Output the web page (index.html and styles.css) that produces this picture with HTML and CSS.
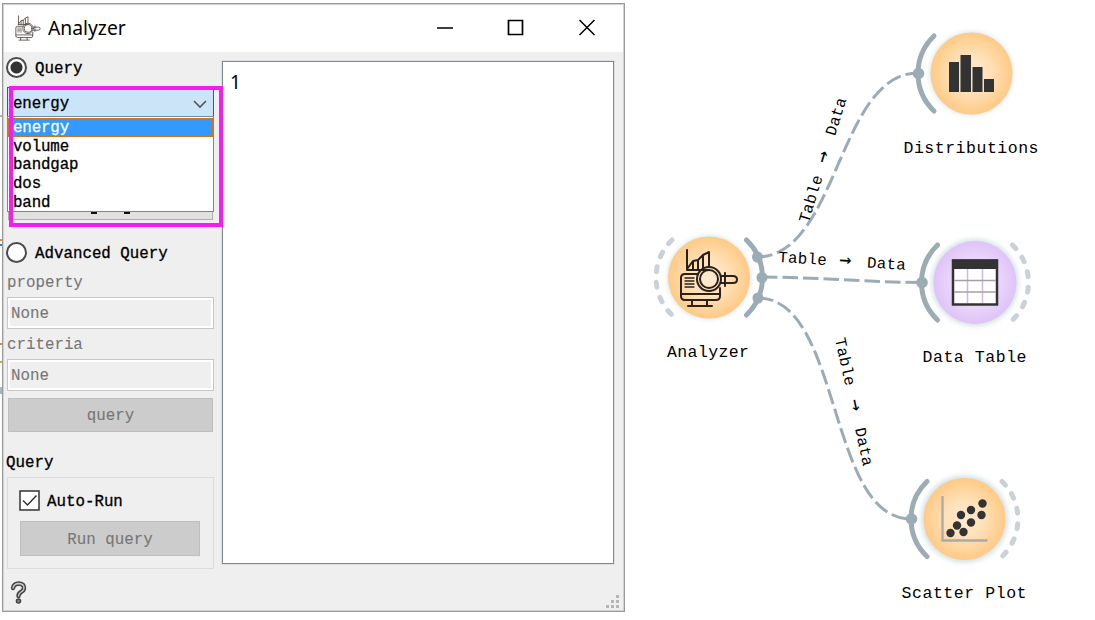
FILE: index.html
```html
<!DOCTYPE html>
<html lang="en">
<head>
<meta charset="utf-8">
<title>Analyzer</title>
<link rel="stylesheet" href="styles.css">
</head>
<body>
<svg width="0" height="0" class="defs">
  <defs>
    <radialGradient id="orange"><stop offset="0" stop-color="#ffebd2"/><stop offset=".45" stop-color="#ffe1b9"/><stop offset="1" stop-color="#ffca85"/></radialGradient>
    <radialGradient id="violet"><stop offset="0" stop-color="#f3e6fd"/><stop offset=".5" stop-color="#ecdafb"/><stop offset="1" stop-color="#dfc3f7"/></radialGradient>
    <filter id="glow" x="-30%" y="-30%" width="160%" height="160%"><feGaussianBlur stdDeviation="2.5"/></filter>
    <g id="machine" fill="none" stroke="#2b211a" stroke-width="2" stroke-linejoin="round" stroke-linecap="round">
      <path d="M8 22V2M8 22H30M8 21L14 13L19 12L24 7L30 4V19M14 14V21M19 12V21M24 8V20"/>
      <path d="M19 26H6Q2 26 2 30V48Q2 52 6 52H37Q41 52 41 48V40M2 46H41M13 52V57M28 52V57M9 58H33"/>
      <path d="M6 30H15M6 33H15M6 36H15M6 39H15" stroke-width="1.3"/>
      <circle cx="30" cy="31" r="12"/><circle cx="30" cy="31" r="9"/>
      <path d="M42 28H54Q58 28 58 31.500T54 35H42M46 25V38"/>
    </g>
  </defs>
</svg>
<div class="desktop">
  <div class="edge"><i class="e1"></i><i class="e2"></i><i class="e3"></i><i class="e4"></i></div>
  <section class="window">
    <header class="titlebar">
      <svg class="appicon" width="26" height="26" viewBox="0 0 60 60"><use href="#machine" stroke-width="3"/></svg>
      <span class="title">Analyzer</span>
      <svg class="controls" width="160" height="20" viewBox="0 0 160 20" fill="none" stroke="#000" stroke-width="1.7">
        <path d="M1 10H17M72.500 2.500H86.500V16.500H72.500Z"/><path d="M143.500 2L158.500 17M158.500 2L143.500 17" stroke-width="1.5"/>
      </svg>
    </header>
    <div class="body">
      <aside class="side">
        <label class="radio"><i class="dot on"></i><span>Query</span></label>
        <div class="combo"><span>energy</span>
          <svg width="16" height="10" viewBox="0 0 16 10" fill="none" stroke="#555" stroke-width="1.6"><path d="M2 2L8 8L14 2"/></svg>
          <ul class="menu"><li class="sel">energy</li><li>volume</li><li>bandgap</li><li>dos</li><li>band</li></ul>
          <div class="marker"></div>
        </div>
        <div class="hiddenbtn"><i></i><i></i></div>
        <label class="radio adv"><i class="dot"></i><span>Advanced Query</span></label>
        <div class="lab">property</div>
        <div class="field">None</div>
        <div class="lab">criteria</div>
        <div class="field">None</div>
        <div class="btn">query</div>
        <div class="grouptitle">Query</div>
        <div class="group">
          <label class="check"><svg width="21" height="21" viewBox="0 0 21 21" fill="#fff" stroke="#333" stroke-width="1.5"><rect x="1" y="1" width="19" height="19"/><path d="M4 10.500L8.500 15L17.500 5.500" fill="none"/></svg><span>Auto-Run</span></label>
          <div class="btn run">Run query</div>
        </div>
        <svg class="help" width="17" height="23" viewBox="0 0 17 23" fill="none" stroke-linecap="round">
          <path d="M3 7Q4 2.500 9 2.500Q14 3 14 7Q14 9.500 11 11Q8.500 12.500 8.500 15" stroke="#444" stroke-width="4.400"/>
          <path d="M3 7Q4 2.500 9 2.500Q14 3 14 7Q14 9.500 11 11Q8.500 12.500 8.500 15" stroke="#ccc" stroke-width="1.300"/>
          <circle cx="8.500" cy="20" r="2" fill="#888" stroke="#444" stroke-width="1.600"/>
        </svg>
      </aside>
      <main class="output"><span>1</span></main>
    </div>
    <svg class="grip" width="14" height="14" viewBox="0 0 14 14" fill="#b5b5b5"><path d="M10 0h3v3h-3zM10 5h3v3h-3zM10 10h3v3h-3zM5 5h3v3h-3zM5 10h3v3h-3zM0 10h3v3h-3z"/></svg>
  </section>
  <svg class="canvas" width="470" height="620" viewBox="625 0 470 620">
    <g class="links">
      <path d="M757 257C838 257 838 73 918 73"/>
      <path d="M762 277C815 277 870 282.500 922 282.500"/>
      <path d="M758 298C842 298 827 519 911 519"/>
    </g>
    <g class="halo" filter="url(#glow)">
      <circle cx="709" cy="277.500" r="41.500"/><circle cx="971.500" cy="73.500" r="41.500"/><circle cx="975" cy="282.500" r="43.500"/><circle cx="964.500" cy="519" r="43.500"/>
    </g>
    <circle cx="709" cy="277.500" r="41" fill="url(#orange)"/>
    <circle cx="971.500" cy="73.500" r="41" fill="url(#orange)"/>
    <circle cx="975" cy="282.500" r="41.500" fill="url(#violet)"/>
    <circle cx="964.500" cy="519" r="41" fill="url(#orange)"/>
    <g class="arcs">
      <path d="M746.500 240A52 52 0 0 1 746.500 315"/>
      <path d="M934 36A52 52 0 0 0 934 111"/>
      <path d="M937.500 245A52 52 0 0 0 937.500 320"/>
      <path d="M927 481.500A52 52 0 0 0 927 556.500"/>
    </g>
    <g class="open">
      <path d="M672 240A52 52 0 0 0 672 315"/>
      <path d="M1012.500 245A52 52 0 0 1 1012.500 320"/>
      <path d="M1002 481.500A52 52 0 0 1 1002 556.500"/>
    </g>
    <g fill="#9bacb4">
      <circle cx="757.500" cy="257" r="5.500"/><circle cx="762" cy="277.500" r="5.500"/><circle cx="758" cy="298" r="5.500"/>
      <circle cx="918.500" cy="73.500" r="5.800"/><circle cx="922" cy="282.500" r="5.800"/><circle cx="911.500" cy="519" r="5.800"/>
    </g>
    <use href="#machine" x="679" y="248"/>
    <path fill="#333" d="M949 62h10v30h-10zM960.500 55h10.500v37h-10.500zM972.500 67h10v25h-10zM984 79h10v13h-10z"/>
    <g>
      <rect x="953" y="260.500" width="44" height="44" fill="#fff" stroke="#333" stroke-width="2.500"/>
      <path d="M952 259.500h46v9.500h-46z" fill="#333"/>
      <path d="M967.500 269V303M982.500 269V303" stroke="#cbbdd2" stroke-width="1.500"/>
      <path d="M954 280.500H996M954 292H996" stroke="#a79ead" stroke-width="1.300"/>
    </g>
    <path d="M942.500 496V540.500H987.500" fill="none" stroke="#aaa" stroke-width="2.300"/>
    <g fill="#333"><circle cx="950.500" cy="533" r="4.200"/><circle cx="957" cy="525.500" r="4.200"/><circle cx="963.500" cy="532" r="4.200"/><circle cx="961" cy="515" r="4.200"/><circle cx="971" cy="522.500" r="4.200"/><circle cx="971" cy="510" r="4.200"/><circle cx="981.500" cy="515" r="4.200"/><circle cx="982.500" cy="503.500" r="4.200"/></g>
    <g class="names">
      <text x="667" y="357" textLength="82">Analyzer</text>
      <text x="903.500" y="153" textLength="135">Distributions</text>
      <text x="922.500" y="362" textLength="104">Data Table</text>
      <text x="901.500" y="598" textLength="125">Scatter Plot</text>
    </g>
    <g class="linktext">
      <text transform="translate(808.500 223.500) rotate(-73)"><tspan x="0">Table</tspan><tspan class="arrow" x="62">→</tspan><tspan x="91">Data</tspan></text>
      <text transform="translate(778 262) rotate(3.500)"><tspan x="0">Table</tspan><tspan class="arrow" x="61">→</tspan><tspan x="89">Data</tspan></text>
      <text transform="translate(835 339) rotate(77.500)"><tspan x="0">Table</tspan><tspan class="arrow" x="63">→</tspan><tspan x="92">Data</tspan></text>
    </g>
  </svg>
</div>
</body>
</html>
```
FILE: styles.css
```css
* { box-sizing: border-box; }
body { margin: 0; background: #fff; overflow: hidden; }
.defs { position: absolute; }
.desktop {
  display: flex; width: 1095px; height: 620px; position: relative;
  font: 15.8px/18px "Liberation Mono", monospace; color: #000;
  -webkit-text-stroke: .3px currentColor;
}
svg { display: block; flex: none; }
.edge { width: 2px; flex: none; display: flex; flex-direction: column; }
.edge i { width: 2px; }
.e1 { margin-top: 115px; height: 2px; background: #a9b8c0; }
.e2 { margin-top: 122px; height: 7px; border-top: 2px solid #d99350; border-bottom: 2px solid #3778b8; }
.e3 { margin-top: 97px; height: 20px; border-top: 2px solid #d78b45; border-bottom: 2px solid #e0a060; }
.e4 { margin-top: 24px; height: 7px; background: #a9b8c0; }
.window {
  width: 623px; height: 609px; margin-top: 3px; flex: none; position: relative;
  border: 1px solid #9a9a9a; background: #efefef;
  box-shadow: inset 0 0 0 1px #d2d2d2; display: flex; flex-direction: column;
}
.titlebar { height: 48px; flex: none; background: #fff; display: flex; align-items: center; padding: 0 27px 2px 11px; margin: 0 1px; border-top: 1px solid #cfcfcf; }
.appicon { opacity: .8; }
.title { font: 19.3px/24px "Noto Sans", sans-serif; margin-left: 7px; flex: 1; -webkit-text-stroke: 0; }
.body { display: flex; padding: 9px 10px 0 4px; align-items: flex-start; }
.side { width: 207px; height: 552px; margin-top: -4px; display: flex; flex-direction: column; }
.radio { display: flex; align-items: center; gap: 8px; height: 22px; margin: -1px 0 1px -1px; }
.radio span { padding-top: 3px; }
.dot { width: 21px; height: 21px; border: 2px solid #4b4b4b; border-radius: 50%; background: #fff; }
.dot.on { background: radial-gradient(circle, #333 0 5.5px, #fff 6.500px); }
.combo {
  height: 30px; margin-top: 8px; position: relative; background: #cce4f7; border: 1px solid #17679f;
  display: flex; align-items: center; justify-content: space-between; padding: 4px 5px 0;
}
.combo, .menu { letter-spacing: -.15px; }
.menu {
  list-style: none; margin: 0; padding: 1px 0 0; position: absolute; z-index: 1; left: -1px; top: 28px;
  width: 207px; height: 96px; background: #fff; border: 1px solid #7d8793;
}
.menu li { height: 18.700px; line-height: 20px; padding-left: 5px; }
.menu .sel { background: #3399ff; color: #fff; outline: 1px dotted #c97325; outline-offset: -1px; }
.marker { position: absolute; z-index: 2; left: 1px; top: -2px; width: 214px; height: 141px; border: 4px solid #f51cf0; }
.hiddenbtn { height: 34px; margin: 69px 1px 0; background: #e1e1e1; border: 1px solid #adadad; display: flex; padding: 25px 0 0 82px; gap: 27px; }
.hiddenbtn i { width: 6px; height: 2px; background: #111; }
.radio.adv { margin-top: 21px; }
.lab { height: 18px; margin-top: 10px; color: #777; }
.field { height: 32px; margin-top: 5px; border: 1px solid #c6c6c6; box-shadow: inset 0 0 0 2px #fff; color: #777; padding: 7px 3px; }
.field + .lab { margin-top: 7px; }
.field + .btn { margin-top: 7px; }
.btn { height: 34px; margin: 0 1px; background: #ccc; border: 1px solid #bfbfbf; color: #777; text-align: center; line-height: 35px; }
.field, .lab, .btn { -webkit-text-stroke-width: .1px; }
.grouptitle { margin-top: 22px; height: 18px; margin-left: -1px; }
.group { height: 92px; margin-top: 5px; border: 1px solid #dcdcdc; padding: 12px 12px 0 10px; }
.check { display: flex; align-items: center; gap: 7px; margin-left: 1px; }
.check span { padding-top: 3px; }
.run { margin: 10px 1px 0 2px; height: 35px; line-height: 37px; }
.help { margin: 12px 0 0 3px; }
.output { width: 392px; height: 503px; margin-left: 8px; background: #fff; border: 1px solid #7f8792; box-shadow: 0 0 0 1px #dde0e4; padding: 8px 7px; }
.output span { font: 19px/24px "Noto Sans", sans-serif; -webkit-text-stroke: 0; }
.grip { position: absolute; right: 4px; bottom: 2px; }
.canvas { width: 470px; height: 620px; }
.links { fill: none; stroke: #9bacb4; stroke-width: 3; stroke-dasharray: 15.500 5; }
.arcs { fill: none; stroke: #9bacb4; stroke-width: 5; stroke-linecap: round; }
.open { fill: none; stroke: #c9d3d7; stroke-width: 5; stroke-linecap: round; stroke-dasharray: 5 10.500; }
.halo { fill: #c5d6da; opacity: .75; }
.names text { font-size: 16.500px; }
.linktext { font-size: 15.800px; letter-spacing: .3px; -webkit-text-stroke-width: .1px; }
.arrow { font-size: 20px; font-family: "DejaVu Sans Mono", monospace; }
```
